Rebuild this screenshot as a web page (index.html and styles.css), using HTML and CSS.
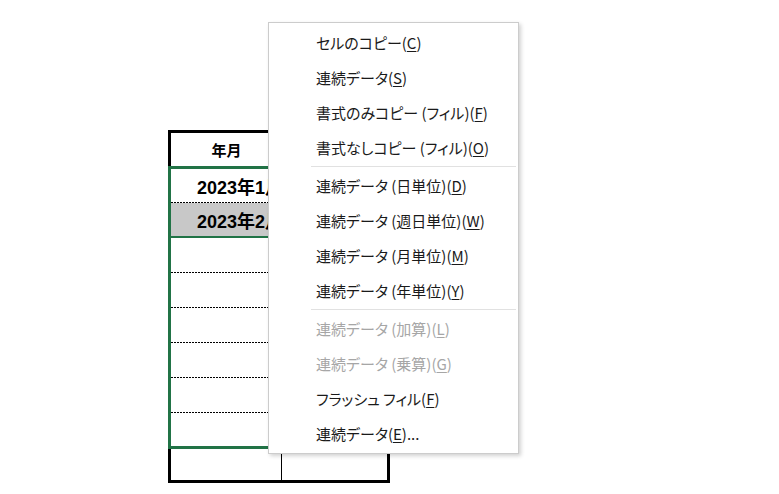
FILE: index.html
```html
<!DOCTYPE html>
<html lang="ja">
<head>
    <meta charset="UTF-8">
    <meta name="viewport" content="width=device-width, initial-scale=1.0">
    <title>連続データ</title>
    <link rel="stylesheet" href="styles.css">
</head>
<body>
    <main class="sheet">
        <div class="grid">
            <div class="row head">
                <div class="cell center">年月</div>
                <div class="cell"></div>
            </div>
            <div class="selection">
                <div class="row r1 dotted">
                    <div class="cell date">2023年1月</div>
                    <div class="cell"></div>
                </div>
                <div class="row r2 active">
                    <div class="cell date">2023年2月</div>
                    <div class="cell"></div>
                </div>
                <div class="row r3 dotted"><div class="cell"></div><div class="cell"></div></div>
                <div class="row r3 dotted"><div class="cell"></div><div class="cell"></div></div>
                <div class="row r3 dotted"><div class="cell"></div><div class="cell"></div></div>
                <div class="row r3 dotted"><div class="cell"></div><div class="cell"></div></div>
                <div class="row r3 dotted"><div class="cell"></div><div class="cell"></div></div>
                <div class="row r8"><div class="cell"></div><div class="cell"></div></div>
            </div>
            <div class="row last">
                <div class="cell divided"></div>
                <div class="cell"></div>
            </div>
        </div>

        <ul class="menu">
            <li>セルのコピー(<u>C</u>)</li>
            <li>連続データ(<u>S</u>)</li>
            <li>書式のみコピー (フィル)(<u>F</u>)</li>
            <li>書式なしコピー (フィル)(<u>O</u>)</li>
            <li class="sep"></li>
            <li>連続データ (日単位)(<u>D</u>)</li>
            <li>連続データ (週日単位)(<u>W</u>)</li>
            <li>連続データ (月単位)(<u>M</u>)</li>
            <li>連続データ (年単位)(<u>Y</u>)</li>
            <li class="sep"></li>
            <li class="disabled">連続データ (加算)(<u>L</u>)</li>
            <li class="disabled">連続データ (乗算)(<u>G</u>)</li>
            <li>フラッシュ フィル(<u>F</u>)</li>
            <li>連続データ(<u>E</u>)...</li>
        </ul>
    </main>
</body>
</html>
```

FILE: styles.css
```css
body{
    margin: 0;
    background-color: white;
    font-family: "Noto Sans CJK JP", "Noto Sans", sans-serif;
    color: black;
}
.sheet{
    position: relative;
    width: 779px;
    height: 494px;
    padding: 130px 0 0 168px;
    box-sizing: border-box;
}
.grid{
    width: 222px;
}
.row{
    display: grid;
    grid-template-columns: 111px 1fr;
    box-sizing: border-box;
}
.head{
    height: 36px;
    border: 3px solid black;
    border-bottom: none;
    font-weight: bold;
    font-size: 15px;
}
.center{
    display: flex;
    align-items: center;
    justify-content: center;
}
.selection{
    border: 3px solid #217346;
}
.r1{
    height: 34px;
}
.r2{
    height: 35px;
    border-bottom: 2px solid #217346;
}
.r3{
    height: 35px;
}
.r8{
    height: 33px;
}
.dotted{
    background: linear-gradient(to right, black 2px, transparent 2px) left bottom / 3px 1px repeat-x;
}
.active{
    background-color: #c8c8c8;
}
.date{
    display: flex;
    align-items: center;
    padding-left: 26px;
    font-family: "Liberation Sans", "Noto Sans CJK JP", sans-serif;
    font-weight: bold;
    font-size: 18px;
    white-space: nowrap;
}
.last{
    height: 34px;
    border: 3px solid black;
    border-top: none;
}
.divided{
    border-right: 1px solid black;
}

.menu{
    position: absolute;
    left: 268px;
    top: 22px;
    width: 251px;
    margin: 0;
    padding: 2px 0;
    list-style: none;
    background-color: white;
    border: 1px solid #cccccc;
    box-sizing: border-box;
    box-shadow: 2px 2px 4px rgba(0, 0, 0, 0.18);
}
.menu li{
    height: 35px;
    line-height: 35px;
    padding-left: 47px;
    font-size: 15px;
    font-feature-settings: "palt";
    color: #1a1a1a;
    white-space: nowrap;
}
.menu li u{
    text-underline-offset: 2px;
}
.menu .sep{
    height: 1px;
    margin: 1px 2px 1px 42px;
    padding: 0;
    background-color: #e1e1e1;
}
.menu .disabled{
    color: #a6a6a6;
}
```
